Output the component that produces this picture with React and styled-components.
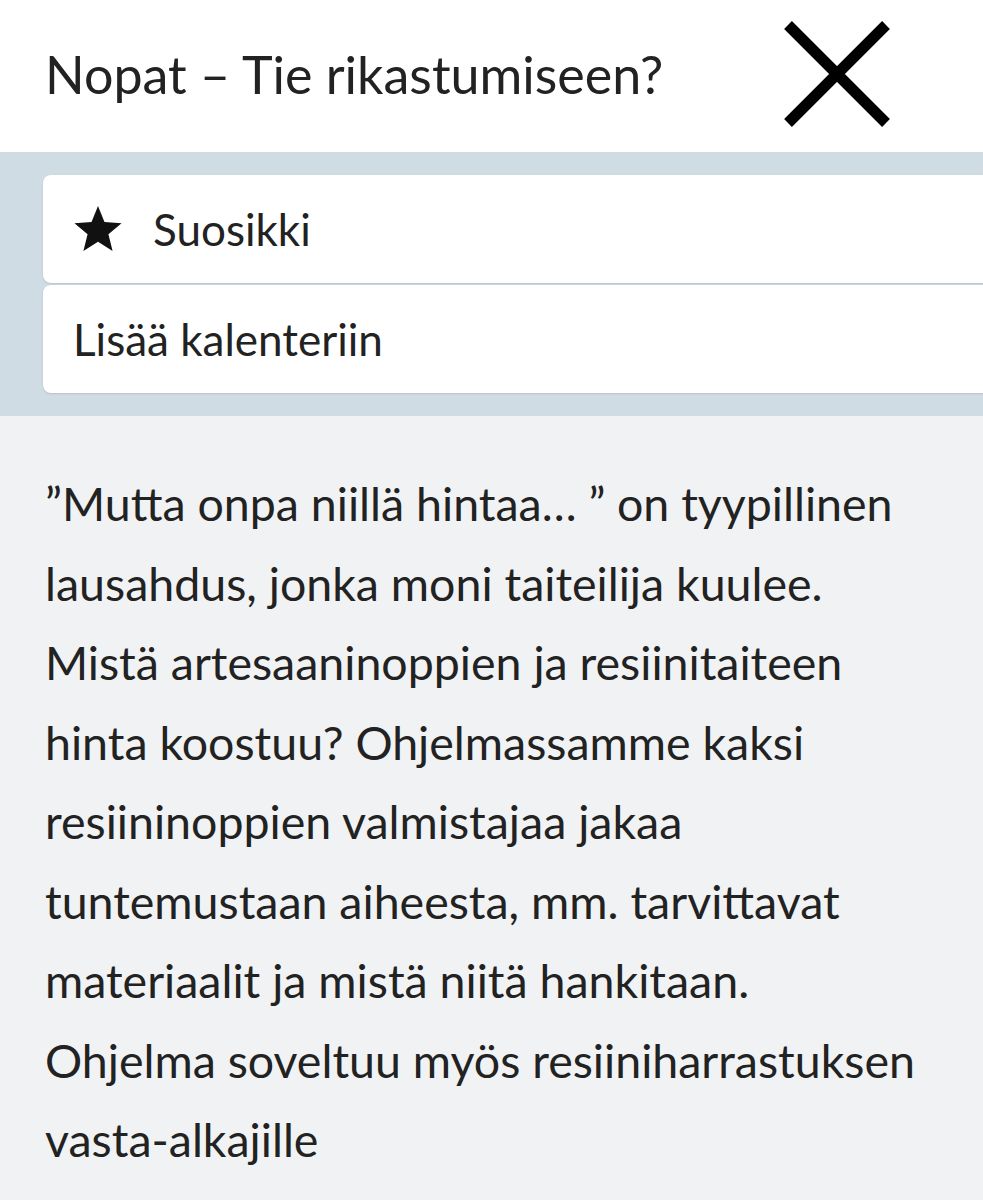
import styled, { createGlobalStyle } from "styled-components";

const GlobalStyle = createGlobalStyle`
  html, body {
    margin: 0;
    padding: 0;
    background: #f0f2f4;
    font-family: Lato, "Noto Sans", sans-serif;
    color: #222;
  }
`;

const Page = styled.div`
  width: 983px;
  overflow: hidden;
`;

const Header = styled.header`
  height: 152px;
  background: #fff;
  display: flex;
  align-items: center;
  justify-content: space-between;
  padding: 0 92px 0 45px;
  box-sizing: border-box;
`;

const Title = styled.h1`
  margin: -4px 0 0;
  font-size: 52px;
  font-weight: 400;
  color: #222;
`;

const CloseButton = styled.button`
  border: 0;
  background: none;
  padding: 0;
  width: 108px;
  height: 108px;
  margin-top: -4px;
  display: flex;
  align-items: center;
  justify-content: center;
`;

const Band = styled.section`
  background: #d0dce3;
  padding: 23px 0 23px 43px;
  display: flex;
  flex-direction: column;
  gap: 2px;
`;

const Action = styled.div`
  height: 108px;
  background: #fff;
  border-radius: 8px 0 0 8px;
  margin-right: -20px;
  box-shadow: 0 1px 2px rgba(0, 0, 0, 0.12);
  display: flex;
  align-items: center;
  gap: 30px;
  padding-left: 30px;
  font-size: 44px;
  color: #222;
`;

const Body = styled.p`
  margin: 0;
  padding: 48px 56px 30px 45px;
  font-size: 46.5px;
  line-height: 79.5px;
  color: #222;
`;

function Star() {
  return (
    <svg width="50" height="48" viewBox="0 0 24 23">
      <path d="M12 0.5l3.1 7.6 8.2 0.6-6.3 5.3 2 8-7-4.4-7 4.4 2-8L0.7 8.7l8.2-0.6z" fill="#111" />
    </svg>
  );
}

export default function App() {
  return (
    <Page>
      <GlobalStyle />
      <Header>
        <Title>Nopat – Tie rikastumiseen?</Title>
        <CloseButton aria-label="Sulje">
          <svg width="106" height="106" viewBox="0 0 106 106">
            <path d="M4 4L102 102M102 4L4 102" stroke="#000" strokeWidth="11" />
          </svg>
        </CloseButton>
      </Header>
      <Band>
        <Action>
          <Star />
          <span>Suosikki</span>
        </Action>
        <Action>Lisää kalenteriin</Action>
      </Band>
      <Body>
        ”Mutta onpa niillä hintaa… ” on tyypillinen lausahdus, jonka moni taiteilija kuulee.
        Mistä artesaaninoppien ja resiinitaiteen hinta koostuu? Ohjelmassamme kaksi
        resiininoppien valmistajaa jakaa tuntemustaan aiheesta, mm. tarvittavat materiaalit ja
        mistä niitä hankitaan. Ohjelma soveltuu myös resiiniharrastuksen vasta&#8209;alkajille
      </Body>
    </Page>
  );
}
